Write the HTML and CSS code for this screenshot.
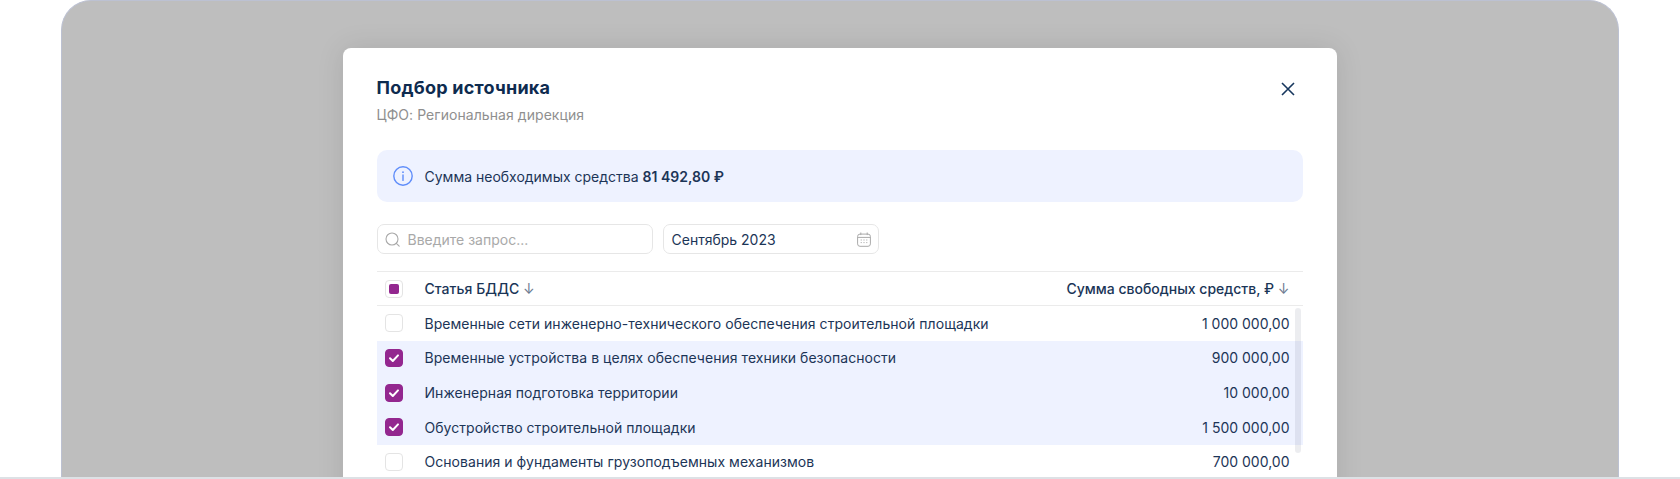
FILE: index.html
```html
<!DOCTYPE html>
<html lang="ru">
<head>
<meta charset="utf-8">
<title>Подбор источника</title>
<link rel="stylesheet" href="styles.css">
</head>
<body>
<div class="stage">
  <div class="backdrop">
    <section class="modal">
      <header class="modal-head">
        <div>
          <h1 class="title">Подбор источника</h1>
          <p class="subtitle">ЦФО: Региональная дирекция</p>
        </div>
        <button class="close" aria-label="Закрыть">
          <svg width="14" height="14" viewBox="0 0 14 14"><path d="M1 1l12 12M13 1L1 13" fill="none" stroke="#17375e" stroke-width="1.6"/></svg>
        </button>
      </header>
      <div class="notice">
        <svg class="notice-icon" width="20" height="20" viewBox="0 0 20 20"><circle cx="10" cy="10" r="9.2" fill="none" stroke="#5f8dfa" stroke-width="1.4"/><circle cx="10" cy="6.2" r=".9" fill="#5f8dfa"/><path d="M10 9v5.4" stroke="#5f8dfa" stroke-width="1.4" stroke-linecap="round"/></svg>
        <span>Сумма необходимых средства <b class="strong">81 492,80 ₽</b></span>
      </div>
      <div class="filters">
        <div class="field field-search">
          <svg width="15" height="15" viewBox="0 0 15 15"><circle cx="7" cy="7" r="6" fill="none" stroke="#a9a9a9" stroke-width="1.1"/><path d="M11.3 11.3l2.9 2.9" stroke="#a9a9a9" stroke-width="1.1" stroke-linecap="round"/></svg>
          <span class="placeholder">Введите запрос...</span>
        </div>
        <div class="field field-date">
          <span>Сентябрь 2023</span>
          <svg width="14" height="15" viewBox="0 0 14 15"><rect x=".6" y="2.1" width="12.8" height="12.2" rx="2.4" fill="none" stroke="#a9a9a9" stroke-width="1"/><path d="M.8 5.4h12.4M3.8.5v2.6M10.2.5v2.6" stroke="#a9a9a9" stroke-width="1" fill="none"/><path d="M3.6 8h1.4M6.3 8h1.4M9 8h1.4M3.6 10.6h1.4M6.3 10.6h1.4M9 10.6h1.4" stroke="#bdbdbd" stroke-width="1"/></svg>
        </div>
      </div>
      <div class="table">
        <div class="row row-head">
          <span class="check check-mixed"><i class="mark"></i></span>
          <span class="cell-name">Статья БДДС <span class="sort">↓</span></span>
          <span class="cell-sum">Сумма свободных средств, ₽ <span class="sort">↓</span></span>
        </div>
        <div class="row">
          <span class="check"></span>
          <span class="cell-name">Временные сети инженерно-технического обеспечения строительной площадки</span>
          <span class="cell-sum">1 000 000,00</span>
        </div>
        <div class="row row-selected">
          <span class="check check-on"><svg width="12" height="10" viewBox="0 0 12 10"><path d="M2 5.2l2.8 2.8 5.2-5.6" fill="none" stroke="#fff" stroke-width="2" stroke-linecap="round" stroke-linejoin="round"/></svg></span>
          <span class="cell-name">Временные устройства в целях обеспечения техники безопасности</span>
          <span class="cell-sum">900 000,00</span>
        </div>
        <div class="row row-selected">
          <span class="check check-on"><svg width="12" height="10" viewBox="0 0 12 10"><path d="M2 5.2l2.8 2.8 5.2-5.6" fill="none" stroke="#fff" stroke-width="2" stroke-linecap="round" stroke-linejoin="round"/></svg></span>
          <span class="cell-name">Инженерная подготовка территории</span>
          <span class="cell-sum">10 000,00</span>
        </div>
        <div class="row row-selected">
          <span class="check check-on"><svg width="12" height="10" viewBox="0 0 12 10"><path d="M2 5.2l2.8 2.8 5.2-5.6" fill="none" stroke="#fff" stroke-width="2" stroke-linecap="round" stroke-linejoin="round"/></svg></span>
          <span class="cell-name">Обустройство строительной площадки</span>
          <span class="cell-sum">1 500 000,00</span>
        </div>
        <div class="row">
          <span class="check"></span>
          <span class="cell-name">Основания и фундаменты грузоподъемных механизмов</span>
          <span class="cell-sum">700 000,00</span>
        </div>
        <div class="scrollbar"></div>
      </div>
    </section>
  </div>
</div>
<div class="strip"></div>
</body>
</html>
```

FILE: styles.css
```css
* { box-sizing: border-box; }
html, body { margin: 0; height: 479px; overflow: hidden; background: #fff; }
body { font-family: Inter, "Liberation Sans", sans-serif; font-size: 14px; color: #1c3557; display: flex; flex-direction: column; }
.stage { height: 477px; padding: 0 61px; overflow: hidden; }
.backdrop { height: 477px; background: #bebebe; border: 1.5px solid #bcc1d2; border-bottom: 0; border-radius: 30px 30px 0 0; padding-top: 47px; overflow: hidden; }
.strip { height: 2px; background: #dde1e5; }
.modal { width: 994px; height: 460px; margin: 0 0 0 280.5px; background: #fff; border-radius: 8px 8px 0 0; padding: 0 34px; box-shadow: 0 0 28px rgba(0,0,0,.1); }
.modal-head { display: flex; justify-content: space-between; align-items: flex-start; padding-top: 28px; height: 102px; }
.title { margin: 0; font-size: 18px; line-height: 24px; font-weight: 700; letter-spacing: .23px; color: #0e2b4f; }
.subtitle { margin: 5px 0 0; font-size: 14px; line-height: 20px; letter-spacing: .06px; color: #8f8f8f; }
.close { border: 0; background: none; padding: 0; margin: 6px 8px 0 0; width: 14px; height: 14px; display: block; }
.close svg { display: block; }
.notice { height: 52px; display: flex; align-items: center; gap: 12px; padding-left: 16px; background: #eef2ff; border-radius: 10px; }
.notice-icon { flex: none; }
.strong { font-weight: 600; }
.filters { display: flex; gap: 10px; margin-top: 22px; }
.field { height: 30px; border: 1px solid #e6e6e6; border-radius: 7px; display: flex; align-items: center; background: #fff; }
.field-search { width: 276px; padding-left: 7px; gap: 8px; }
.field-date { width: 216px; padding: 0 7px 0 8px; justify-content: space-between; }
.placeholder { color: #a9a9a9; }
.table { position: relative; margin-top: 17px; border-top: 1px solid #ebebeb; }
.row { height: 34.67px; display: flex; align-items: center; padding: 0 13px 0 8.5px; }
.row-head { height: 34px; border-bottom: 1px solid #ebebeb; font-weight: 500; color: #1a3557; }
.row-selected { background: #eef2ff; }
.check { width: 18px; height: 18px; flex: none; border: 1.5px solid #e4e4e4; border-radius: 4px; background: #fff; display: flex; align-items: center; justify-content: center; }
.check-on { background: #93278f; border-color: #93278f; }
.mark { width: 10px; height: 10px; border-radius: 2px; background: #93278f; }
.cell-name { margin-left: 21.5px; flex: 1; white-space: nowrap; letter-spacing: .04px; }
.cell-sum { white-space: nowrap; }
.sort { color: #6b7a90; font-weight: 400; }
.scrollbar { position: absolute; right: 2px; top: 36px; width: 6px; height: 145px; border-radius: 3px; background: rgba(120,130,150,.14); }
```
